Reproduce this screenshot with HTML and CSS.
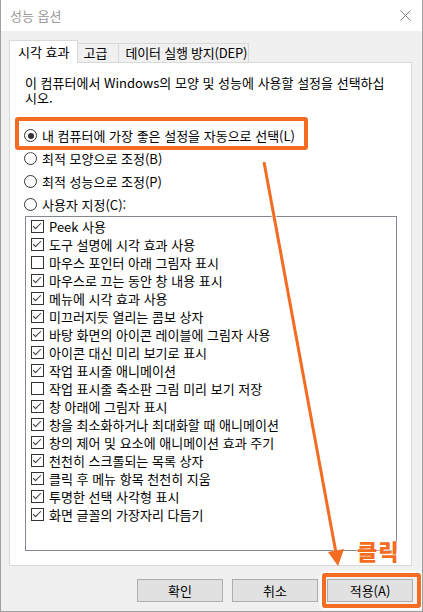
FILE: index.html
```html
<!DOCTYPE html>
<html lang="ko">
<head>
  <meta charset="UTF-8" />
  <title>성능 옵션</title>
  <link rel="stylesheet" href="styles.css">
</head>
<body>

  <div class="window">
    <div class="titlebar">
      <span class="title">성능 옵션</span>
      <svg class="close" width="11" height="11" viewBox="0 0 11 11">
        <path d="M0.5 0.5 L10.5 10.5 M10.5 0.5 L0.5 10.5" stroke="#808080" stroke-width="1" fill="none"/>
      </svg>
    </div>

    <div class="main">
      <div class="tabs">
        <div class="tab active">시각 효과</div>
        <div class="tab tab-adv">고급</div>
        <div class="tab tab-dep">데이터 실행 방지(DEP)</div>
      </div>

      <div class="panel">
        <p class="desc">이 컴퓨터에서 Windows의 모양 및 성능에 사용할 설정을 선택하십시오.</p>

        <div class="radios">
          <div class="radio checked"><span class="circle"></span>내 컴퓨터에 가장 좋은 설정을 자동으로 선택(L)</div>
          <div class="radio"><span class="circle"></span>최적 모양으로 조정(B)</div>
          <div class="radio"><span class="circle"></span>최적 성능으로 조정(P)</div>
          <div class="radio"><span class="circle"></span>사용자 지정(C):</div>
        </div>

        <ul class="list">
          <li><span class="check on"></span>Peek 사용</li>
          <li><span class="check on"></span>도구 설명에 시각 효과 사용</li>
          <li><span class="check"></span>마우스 포인터 아래 그림자 표시</li>
          <li><span class="check on"></span>마우스로 끄는 동안 창 내용 표시</li>
          <li><span class="check on"></span>메뉴에 시각 효과 사용</li>
          <li><span class="check on"></span>미끄러지듯 열리는 콤보 상자</li>
          <li><span class="check on"></span>바탕 화면의 아이콘 레이블에 그림자 사용</li>
          <li><span class="check on"></span>아이콘 대신 미리 보기로 표시</li>
          <li><span class="check on"></span>작업 표시줄 애니메이션</li>
          <li><span class="check"></span>작업 표시줄 축소판 그림 미리 보기 저장</li>
          <li><span class="check on"></span>창 아래에 그림자 표시</li>
          <li><span class="check on"></span>창을 최소화하거나 최대화할 때 애니메이션</li>
          <li><span class="check on"></span>창의 제어 및 요소에 애니메이션 효과 주기</li>
          <li><span class="check on"></span>천천히 스크롤되는 목록 상자</li>
          <li><span class="check on"></span>클릭 후 메뉴 항목 천천히 지움</li>
          <li><span class="check on"></span>투명한 선택 사각형 표시</li>
          <li><span class="check on"></span>화면 글꼴의 가장자리 다듬기</li>
        </ul>
      </div>
    </div>

    <div class="footer">
      <button>확인</button>
      <button>취소</button>
      <button>적용(A)</button>
    </div>

    <!-- annotations drawn over the dialog -->
    <div class="mark mark-auto"></div>
    <div class="mark mark-apply"></div>
    <svg class="arrow" width="423" height="612" viewBox="0 0 423 612">
      <line x1="264" y1="162" x2="336" y2="553" stroke="#fff" stroke-width="5" stroke-opacity="0.7"/>
      <line x1="264" y1="162" x2="336" y2="553" stroke="#f36c21" stroke-width="3"/>
      <polygon points="338,566 344,549 328,552" fill="#f36c21"/>
    </svg>
    <div class="click-label">클릭</div>
  </div>

</body>
</html>
```

FILE: styles.css
```css
body {
  margin: 0;
  font-family: "Noto Sans CJK KR", "Noto Sans", sans-serif;
  font-size: 13px;
  color: #000;
  background: #fff;
}

.window {
  position: relative;
  width: 423px;
  height: 612px;
  box-sizing: border-box;
  border: 1px solid #a0a0a0;
  border-top: none;
  display: flex;
  flex-direction: column;
  background: #f0f0f0;
  overflow: hidden;
}

.titlebar {
  height: 31px;
  background: #fff;
  display: flex;
  align-items: center;
  justify-content: space-between;
  padding: 0 10px 0 9px;
}

.title {
  color: #9a9a9a;
  line-height: 16px;
}

.close {
  display: block;
  margin-right: 1px;
}

.main {
  flex: 1;
  display: flex;
  flex-direction: column;
  padding: 9px 10px 0 8px;
}

.tabs {
  display: flex;
  align-items: flex-end;
  height: 22px;
  position: relative;
  z-index: 1;
}

.tab {
  height: 19px;
  line-height: 18px;
  padding: 0 6px;
  border: 1px solid #d9d9d9;
  border-bottom: none;
  border-left: none;
  background: #f0f0f0;
  box-sizing: border-box;
  white-space: nowrap;
}

.tab.active {
  height: 23px;
  line-height: 22px;
  padding: 0 8px;
  background: #fff;
  border-left: 1px solid #d9d9d9;
  margin-bottom: -1px;
}

.tab-adv {
  padding: 0 11px 0 5px;
}

.tab-dep {
  padding: 0 1px 0 6px;
  letter-spacing: -0.2px;
}

.panel {
  flex: 1;
  background: #fff;
  border: 1px solid #d9d9d9;
  display: flex;
  flex-direction: column;
  padding: 12px 14px 14px 15px;
}

.desc {
  margin: 0;
  line-height: 15px;
  max-width: 360px;
}

.radios {
  margin-top: 19px;
}

.radio {
  display: flex;
  align-items: center;
  height: 23px;
  margin-left: -1px;
}

.circle {
  width: 11px;
  height: 11px;
  border: 1px solid #333;
  border-radius: 50%;
  margin-right: 5px;
  display: flex;
  align-items: center;
  justify-content: center;
}

.radio.checked .circle::after {
  content: "";
  width: 6px;
  height: 6px;
  border-radius: 50%;
  background: #333;
}

.list {
  flex: 1;
  list-style: none;
  margin: 0;
  padding: 0;
  border: 1px solid #828790;
  width: 372px;
  box-sizing: border-box;
}

.list li {
  display: flex;
  align-items: center;
  height: 18px;
  padding-left: 5px;
}

.check {
  position: relative;
  width: 11px;
  height: 11px;
  border: 1px solid #333;
  margin-right: 5px;
  flex-shrink: 0;
}

.check.on::after {
  content: "";
  position: absolute;
  left: 3px;
  top: 0;
  width: 3px;
  height: 7px;
  border-right: 1px solid #333;
  border-bottom: 1px solid #333;
  transform: rotate(45deg);
}

.footer {
  height: 45px;
  display: flex;
  justify-content: flex-end;
  gap: 9px;
  padding: 13px 9px 0 0;
  box-sizing: border-box;
}

.footer button {
  width: 86px;
  height: 23px;
  background: #e1e1e1;
  border: 1px solid #adadad;
  font-family: inherit;
  font-size: 13px;
  color: #000;
  padding: 0;
}

/* annotations */
.mark {
  position: absolute;
  border: 4px solid #f36c21;
  border-radius: 3px;
  box-shadow: 0 0 2px 2px rgba(255, 255, 255, 0.9);
  box-sizing: border-box;
}

.mark-auto {
  left: 14px;
  top: 117px;
  width: 293px;
  height: 33px;
}

.mark-apply {
  left: 321px;
  top: 573px;
  width: 99px;
  height: 35px;
}

.arrow {
  position: absolute;
  left: -1px;
  top: 0;
  pointer-events: none;
}

.click-label {
  position: absolute;
  left: 356px;
  top: 535px;
  font-size: 22px;
  font-weight: 900;
  line-height: 30px;
  color: #f36c21;
  letter-spacing: 1px;
  text-shadow: 0 0 2px #fff, 0 0 2px #fff;
}
```
